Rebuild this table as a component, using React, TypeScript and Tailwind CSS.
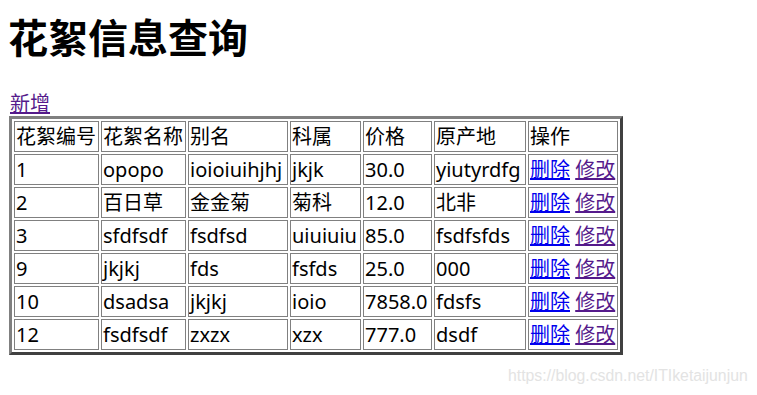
const rows = [
	["1", "opopo", "ioioiuihjhj", "jkjk", "30.0", "yiutyrdfg"],
	["2", "百日草", "金金菊", "菊科", "12.0", "北非"],
	["3", "sfdfsdf", "fsdfsd", "uiuiuiu", "85.0", "fsdfsfds"],
	["9", "jkjkj", "fds", "fsfds", "25.0", "000"],
	["10", "dsadsa", "jkjkj", "ioio", "7858.0", "fdsfs"],
	["12", "fsdfsdf", "zxzx", "xzx", "777.0", "dsdf"],
];

const headers = [
	{ label: "花絮编号", w: "w-[85px]" },
	{ label: "花絮名称", w: "w-[85px]" },
	{ label: "别名", w: "w-[100px]" },
	{ label: "科属", w: "w-[71px]" },
	{ label: "价格", w: "w-[69px]" },
	{ label: "原产地", w: "w-[92px]" },
	{ label: "操作", w: "w-[90px]" },
];

const cell =
	"border border-[#808080] px-[1px] py-[1px] leading-[27px] whitespace-nowrap overflow-hidden align-middle text-left font-normal";

export default function App() {
	return (
		<div className="relative w-[757px] h-[395px] bg-white px-[10px] pt-[14px] text-black font-['Noto_Sans','Noto_Sans_CJK_SC',sans-serif] text-[20px]">
			<h1 className="-ml-[2px] text-[40px] leading-[48px] font-bold">花絮信息查询</h1>
			<div className="mt-[30px] leading-[24px]">
				<a href="#" className="text-[#551a8b] underline">
					新增
				</a>
			</div>
			<table className="-ml-[1px] table-fixed border-separate border-spacing-[2px] border-[3px] border-t-[#808080] border-l-[#808080] border-r-[#404040] border-b-[#404040]">
				<tbody>
					<tr>
						{headers.map((h) => (
							<td key={h.label} className={`${cell} ${h.w}`}>
								{h.label}
							</td>
						))}
					</tr>
					{rows.map((r) => (
						<tr key={r[0]}>
							{r.map((v, i) => (
								<td key={i} className={cell}>
									{v}
								</td>
							))}
							<td className={cell}>
								<a href="#" className="text-[#0000ee] underline">
									删除
								</a>{" "}
								<a href="#" className="text-[#551a8b] underline">
									修改
								</a>
							</td>
						</tr>
					))}
				</tbody>
			</table>
			{/* watermark */}
			<div className="absolute left-[508px] top-[366px] text-[15.8px] leading-[20px] text-[#e3e3e3] font-['Liberation_Sans',sans-serif]">
				https://blog.csdn.net/ITIketaijunjun
			</div>
		</div>
	);
}
